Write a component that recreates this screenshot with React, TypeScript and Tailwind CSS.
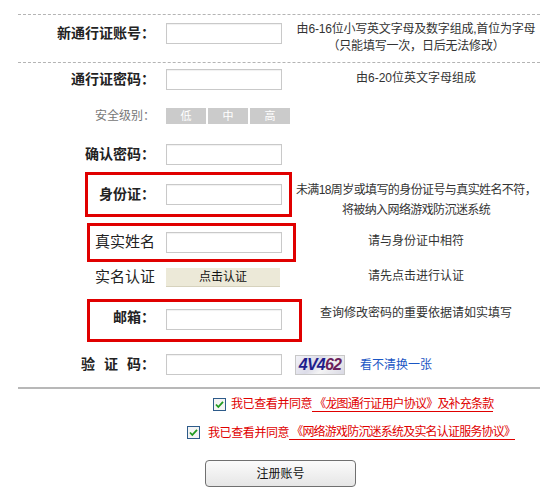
import React from 'react';

const font = { fontFamily: '"Liberation Sans", "Noto Sans CJK SC", sans-serif' };

function Input() {
  return <input className="w-[116px] h-[21px] border border-[#c9c9c9] bg-white shadow-[inset_0_1px_1px_rgba(0,0,0,0.06)] outline-none" />;
}

function Check() {
  return (
    <svg width="13" height="13" viewBox="0 0 13 13" className="shrink-0">
      <rect x="0.5" y="0.5" width="12" height="12" fill="#f4f4f4" stroke="#2d5b8a" />
      <path d="M3 6.5 L5.3 9 L10 3.8" fill="none" stroke="#1f9a1f" strokeWidth="1.8" />
    </svg>
  );
}

export default function App() {
  return (
    <div className="w-[558px] h-[498px] bg-white text-[#333] overflow-hidden" style={font}>
      {/* top dashed line */}
      <div className="pt-[14px] mx-[18px] border-b border-dashed border-[#b4b4b4]" />

      {/* account */}
      <div className="flex items-start h-[47px]">
        <div className="w-[288px] shrink-0 flex items-center pt-[6px]">
          <label className="w-[155px] text-right text-[14px] font-bold text-[#222]">新通行证账号：</label>
          <div className="ml-[11px]"><Input /></div>
        </div>
        <div className="w-[256px] text-center text-[12px] leading-[17px] pt-[6px] whitespace-nowrap tracking-[-0.2px]">
          <p>由6-16位小写英文字母及数字组成,首位为字母</p>
          <p>（只能填写一次，日后无法修改）</p>
        </div>
      </div>

      <div className="mx-[18px] border-b border-dashed border-[#b4b4b4]" />

      {/* password */}
      <div className="flex items-center h-[32px]">
        <div className="w-[288px] shrink-0 flex items-center">
          <label className="w-[155px] text-right text-[14px] font-bold text-[#222]">通行证密码：</label>
          <div className="ml-[11px]"><Input /></div>
        </div>
        <p className="w-[256px] text-center text-[12px] pb-[3px]">由6-20位英文字母组成</p>
      </div>

      {/* strength */}
      <div className="flex items-center h-[42px]">
        <label className="w-[155px] text-right text-[12px] text-[#777]">安全级别：</label>
        <div className="ml-[11px] flex gap-[2px]">
          {['低', '中', '高'].map((t) => (
            <div key={t} className="w-[40px] h-[16px] bg-[#cbcbcb] text-white text-[11px] leading-[16px] text-center">{t}</div>
          ))}
        </div>
      </div>

      {/* confirm */}
      <div className="flex items-center h-[35px]">
        <label className="w-[155px] text-right text-[14px] font-bold text-[#222]">确认密码：</label>
        <div className="ml-[11px]"><Input /></div>
      </div>

      {/* id card */}
      <div className="flex items-start h-[45px]">
        <div className="w-[288px] shrink-0">
          <div className="ml-[85px] w-[207px] h-[45px] border-[3px] border-[#e00000] flex items-center">
            <label className="w-[67px] text-right text-[14px] font-bold text-[#222]">身份证：</label>
            <div className="ml-[11px]"><Input /></div>
          </div>
        </div>
        <div className="w-[256px] text-center text-[12px] leading-[20px] pt-[8px] whitespace-nowrap tracking-[-0.6px]">
          <p>未满18周岁或填写的身份证号与真实姓名不符，</p>
          <p>将被纳入网络游戏防沉迷系统</p>
        </div>
      </div>

      {/* real name */}
      <div className="flex items-start h-[39px] mt-[6px]">
        <div className="w-[288px] shrink-0">
          <div className="ml-[87px] w-[209px] h-[39px] border-[3px] border-[#e00000] flex items-center">
            <label className="w-[65px] text-right text-[15px] text-[#222]">真实姓名</label>
            <div className="ml-[11px]"><Input /></div>
          </div>
        </div>
        <p className="w-[256px] text-center text-[12px] pt-[9px]">请与身份证中相符</p>
      </div>

      {/* verify */}
      <div className="flex items-center h-[30px]">
        <div className="w-[288px] shrink-0 flex items-center">
          <label className="w-[155px] text-right text-[15px] text-[#222]">实名认证</label>
          <button className="ml-[11px] w-[114px] h-[19px] bg-[#ece9d8] border-b border-[#d6d2bd] text-[12px] text-[#111] leading-[19px]">点击认证</button>
        </div>
        <p className="w-[256px] text-center text-[12px] pb-[3px]">请先点击进行认证</p>
      </div>

      {/* email */}
      <div className="flex items-start h-[43px] mt-[7px]">
        <div className="w-[288px] shrink-0">
          <div className="ml-[87px] w-[215px] h-[43px] border-[3px] border-[#e00000] flex items-start pt-[5px]">
            <label className="w-[65px] text-right text-[14px] font-bold text-[#222] leading-[21px]">邮箱：</label>
            <div className="ml-[11px]"><Input /></div>
          </div>
        </div>
        <p className="w-[256px] text-center text-[12px] pt-[5px]">查询修改密码的重要依据请如实填写</p>
      </div>

      {/* captcha */}
      <div className="flex items-center h-[45px]">
        <label className="w-[155px] flex justify-end text-[14px] font-bold text-[#222]">
          <span className="mr-[9px]">验</span>
          <span className="mr-[9px]">证</span>
          <span>码：</span>
        </label>
        <div className="ml-[11px]"><Input /></div>
        <div className="ml-[13px] w-[50px] h-[20px] border border-[#c8c8c8] bg-[linear-gradient(135deg,#f3f3f8,#dcdce8_40%,#f4f4f4_60%,#d9d9e4)] flex items-center justify-center">
          <span className="text-[16px] font-bold italic tracking-[-0.8px] text-[#1e1e8c]" style={{ fontFamily: '"Liberation Sans", sans-serif' }}>
            4V4<span className="text-[#6b1f5c]">62</span>
          </span>
        </div>
        <a className="ml-[15px] text-[12px] text-[#1a56c4] cursor-pointer">看不清换一张</a>
      </div>

      <div className="mx-[18px] h-[2px] bg-[#b8b8b8]" />

      {/* agreements */}
      <div className="flex items-center h-[30px] pl-[213px] text-[12px] text-[#e00000]">
        <Check />
        <span className="ml-[5px] tracking-[-0.4px]">我已查看并同意</span>
        <span className="pl-[2px] border-b border-[#e00000] leading-[14px] tracking-[-0.8px]">《龙图通行证用户协议》及补充条款</span>
      </div>
      <div className="flex items-center h-[27px] pl-[187px] text-[12px] text-[#e00000]">
        <Check />
        <span className="ml-[8px] tracking-[-0.4px]">我已查看并同意</span>
        <span className="pl-[2px] border-b border-[#e00000] leading-[14px] tracking-[-0.8px]">《网络游戏防沉迷系统及实名认证服务协议》</span>
      </div>

      <div className="mt-[14px] pl-[205px]">
        <button className="w-[151px] h-[27px] rounded-[4px] border border-[#707070] bg-[linear-gradient(#fbfbfb,#e6e6e6)] text-[12px] text-[#111]">注册账号</button>
      </div>
    </div>
  );
}
